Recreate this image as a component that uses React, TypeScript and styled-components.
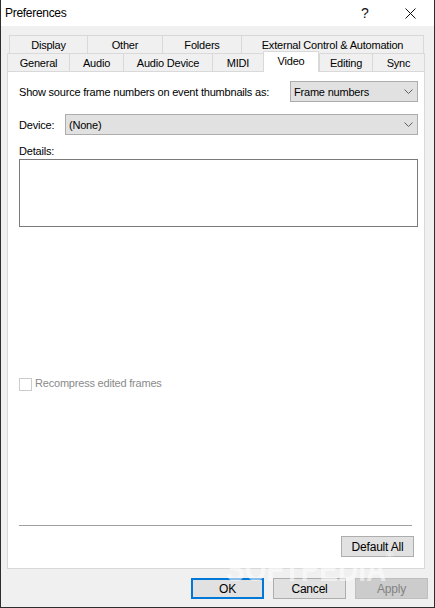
import React from 'react';
import styled, { createGlobalStyle } from 'styled-components';

const ui = `"Liberation Sans", Arial, sans-serif`;

const GlobalStyle = createGlobalStyle`
  html, body {
    margin: 0;
    padding: 0;
    background: #f0f0f0;
  }
  * {
    box-sizing: border-box;
  }
`;

interface TabDef {
  label: string
  width: number
}

const topTabs: TabDef[] = [
  { label: 'Display', width: 78 },
  { label: 'Other', width: 75 },
  { label: 'Folders', width: 79 },
  { label: 'External Control & Automation', width: 183 }
];

const bottomTabs: TabDef[] = [
  { label: 'General', width: 62 },
  { label: 'Audio', width: 54 },
  { label: 'Audio Device', width: 89 },
  { label: 'MIDI', width: 51 },
  { label: 'Video', width: 56 },
  { label: 'Editing', width: 53 },
  { label: 'Sync', width: 53 }
];

const Chevron = () => (
  <svg width="9" height="5" viewBox="0 0 9 5">
    <polyline points="0.5,0.5 4.5,4.5 8.5,0.5" fill="none" stroke="#606060" strokeWidth="1" />
  </svg>
);

const CloseGlyph = () => (
  <svg width="11" height="11" viewBox="0 0 11 11">
    <path d="M0.5 0.5 L10.5 10.5 M10.5 0.5 L0.5 10.5" stroke="#111" strokeWidth="1" />
  </svg>
);

export default function App() {
  return (
    <Window>
      <GlobalStyle />
      <TitleBar>
        <TitleText>Preferences</TitleText>
        <TitleButtons>
          <HelpGlyph>?</HelpGlyph>
          <CloseBox><CloseGlyph /></CloseBox>
        </TitleButtons>
      </TitleBar>

      <Body>
        <TabStrip>
          <TabRow offset={2}>
            {topTabs.map((t, i) => (
              <Tab key={t.label} width={t.width} last={i === topTabs.length - 1}>
                {t.label}
              </Tab>
            ))}
          </TabRow>
          <TabRow offset={0}>
            {bottomTabs.map((t, i) => (
              <Tab
                key={t.label}
                width={t.width}
                last={i === bottomTabs.length - 1}
                active={t.label === 'Video'}>
                {t.label}
              </Tab>
            ))}
          </TabRow>
        </TabStrip>

        <Panel>
          <FieldRow>
            <Label>Show source frame numbers on event thumbnails as:</Label>
            <Combo width={128}>
              <span>Frame numbers</span>
              <Chevron />
            </Combo>
          </FieldRow>
          <FieldRow style={{ marginTop: 12 }}>
            <Label>Device:</Label>
            <Combo width={353}>
              <span>(None)</span>
              <Chevron />
            </Combo>
          </FieldRow>
          <DetailsLabel>Details:</DetailsLabel>
          <TextBox />

          <CheckRow>
            <CheckBox />
            <DisabledText>Recompress edited frames</DisabledText>
          </CheckRow>

          <Spacer />
          <Separator />
          <PanelFooter>
            <Button>Default All</Button>
          </PanelFooter>
        </Panel>
      </Body>

      <Footer>
        <Button primary>OK</Button>
        <Button>Cancel</Button>
        <Button disabled>Apply</Button>
      </Footer>

      <Watermark>SOFTPEDIA<sup>®</sup></Watermark>
    </Window>
  );
}

const Window = styled.div`
  position: relative;
  width: 435px;
  height: 608px;
  display: flex;
  flex-direction: column;
  background: #f0f0f0;
  border: 1px solid #2e2e2e;
  border-top: none;
  font-family: ${ui};
  font-size: 11px;
  letter-spacing: -0.2px;
  color: #000;
  overflow: hidden;
`;

const TitleBar = styled.div`
  height: 26px;
  flex: none;
  background: #fff;
  display: flex;
  align-items: center;
  justify-content: space-between;
  padding-left: 4px;
`;

const TitleText = styled.div`
  font-size: 12px;
  letter-spacing: -0.3px;
  color: #000;
`;

const TitleButtons = styled.div`
  display: flex;
  align-items: center;
  height: 100%;
`;

const HelpGlyph = styled.div`
  width: 46px;
  text-align: center;
  font-size: 14px;
  letter-spacing: 0;
  color: #111;
`;

const CloseBox = styled.div`
  width: 46px;
  height: 100%;
  display: flex;
  align-items: center;
  justify-content: center;
  padding-right: 2px;
`;

const Body = styled.div`
  flex: none;
  padding: 9px 9px 0 6px;
  display: flex;
  flex-direction: column;
`;

const TabStrip = styled.div`
  height: 36px;
  display: flex;
  flex-direction: column;
`;

const TabRow = styled.div<{ offset: number }>`
  height: 18px;
  display: flex;
  align-items: flex-end;
  padding-left: ${p => p.offset}px;
`;

const Tab = styled.div<{ width: number; last?: boolean; active?: boolean }>`
  position: relative;
  width: ${p => p.width}px;
  height: ${p => (p.active ? 21 : 18)}px;
  margin-top: ${p => (p.active ? -2 : 0)}px;
  margin-bottom: ${p => (p.active ? -1 : 0)}px;
  z-index: ${p => (p.active ? 1 : 0)};
  display: flex;
  align-items: center;
  justify-content: center;
  padding-bottom: ${p => (p.active ? 2 : 0)}px;
  background: ${p => (p.active ? '#fff' : '#f0f0f0')};
  border: 1px solid #d9d9d9;
  border-bottom: none;
  border-right: ${p => (p.last || p.active ? '1px solid #d9d9d9' : 'none')};
  white-space: nowrap;
`;

const Panel = styled.div`
  height: 498px;
  background: #fff;
  border: 1px solid #d9d9d9;
  display: flex;
  flex-direction: column;
  padding: 9px 6px 11px 11px;
`;

const FieldRow = styled.div`
  display: flex;
  align-items: center;
  justify-content: space-between;
  height: 21px;
`;

const Label = styled.span`
  white-space: nowrap;
`;

const Combo = styled.div<{ width: number }>`
  width: ${p => p.width}px;
  height: 21px;
  background: #e1e1e1;
  border: 1px solid #adadad;
  display: flex;
  align-items: center;
  justify-content: space-between;
  padding: 0 4px 0 3px;
`;

const DetailsLabel = styled.div`
  margin-top: 9px;
  height: 15px;
  line-height: 15px;
`;

const TextBox = styled.div`
  height: 68px;
  background: #fff;
  border: 1px solid #7a7a7a;
`;

const CheckRow = styled.div`
  margin-top: 149px;
  height: 16px;
  display: flex;
  align-items: center;
  gap: 3px;
`;

const CheckBox = styled.div`
  width: 13px;
  height: 13px;
  background: #fff;
  border: 1px solid #cccccc;
`;

const DisabledText = styled.span`
  color: #8a8a8a;
  margin-top: -2px;
`;

const Spacer = styled.div`
  flex: 1;
`;

const Separator = styled.div`
  height: 1px;
  background: #a0a0a0;
  margin-right: 6px;
`;

const PanelFooter = styled.div`
  display: flex;
  justify-content: flex-end;
  margin-top: 10px;
  padding-right: 4px;
`;

const Button = styled.div<{ primary?: boolean; disabled?: boolean }>`
  width: 73px;
  height: 21px;
  display: flex;
  align-items: center;
  justify-content: center;
  background: ${p => (p.disabled ? '#cccccc' : '#e1e1e1')};
  border: ${p => (p.primary ? '2px solid #0078d7' : p.disabled ? '1px solid #bfbfbf' : '1px solid #adadad')};
  color: ${p => (p.disabled ? '#838383' : '#000')};
  font-size: 12px;
`;

const Footer = styled.div`
  flex: none;
  display: flex;
  justify-content: flex-end;
  gap: 9px;
  padding: 9px 6px 0 0;
`;

const Watermark = styled.div`
  position: absolute;
  left: 225px;
  top: 549px;
  font-size: 35px;
  font-weight: bold;
  letter-spacing: 0;
  color: rgba(255, 255, 255, 0.55);
  transform: scaleX(0.8);
  transform-origin: left top;
  pointer-events: none;
  sup {
    font-size: 12px;
    vertical-align: top;
  }
`;
